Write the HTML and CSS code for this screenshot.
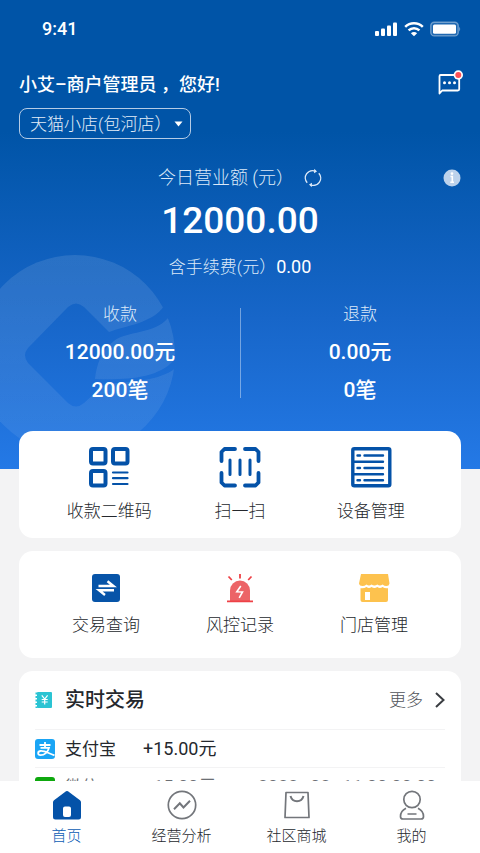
FILE: index.html
```html
<!DOCTYPE html>
<html lang="zh-CN">
<head>
<meta charset="utf-8">
<meta name="viewport" content="width=device-width, initial-scale=1">
<title>首页</title>
<link rel="stylesheet" href="styles.css">
</head>
<body>
<main class="page">
  <header class="hero">
    <svg class="hero-mark" viewBox="-26 254 202 202" aria-hidden="true">
      <defs>
        <linearGradient id="fade" x1="0" y1="0" x2="0" y2="1"><stop offset="0" stop-color="#fff" stop-opacity=".11"/><stop offset="1" stop-color="#fff" stop-opacity=".07"/></linearGradient>
        <mask id="cut" maskUnits="userSpaceOnUse" x="-26" y="254" width="204" height="204">
          <rect x="-26" y="254" width="204" height="204" fill="#fff"/>
          <path fill="#000" d="M28 348 68 307Q76 300 84 307L109 332C125 326 153 323 164 306L180 296V364C165 380 140 381 105 384L84 403Q76 410 68 403L28 363Q22 355 28 348Z"/>
          <path fill="#fff" d="M168 318C155 334 126 331 114 341 102 350 97 362 95 379 124 380 158 379 174 360L180 350V310Z"/>
        </mask>
      </defs>
      <circle cx="75" cy="355" r="100" fill="url(#fade)" mask="url(#cut)"/>
    </svg>

    <div class="status">
      <span class="clock">9:41</span>
      <span class="status-icons">
        <svg width="23" height="15" viewBox="0 0 23 15" fill="#fff" aria-hidden="true"><rect x="0" y="9" width="4" height="5" rx="1"/><rect x="6" y="6.500" width="4" height="7.500" rx="1"/><rect x="12" y="3.500" width="4" height="10.500" rx="1"/><rect x="18" y="0.500" width="4" height="13.500" rx="1"/></svg>
        <svg width="20" height="15" viewBox="0 0 20 15" fill="none" stroke="#fff" stroke-width="2.500" aria-hidden="true"><path d="M1.200 4.800C6 .2 14 .2 18.800 4.800M4.600 8.300C7.600 5.400 12.400 5.400 15.400 8.300"/><path d="M10 14.300 6.900 11.200C8.600 9.500 11.400 9.500 13.100 11.200Z" fill="#fff" stroke="none"/></svg>
        <svg width="31" height="16" viewBox="0 0 31 16" aria-hidden="true"><rect x=".8" y="1.300" width="27.400" height="13.600" rx="3.500" fill="#fff" fill-opacity=".12" stroke="#fff" stroke-opacity=".4" stroke-width="1.400"/><rect x="3" y="3.400" width="23" height="9.400" rx="1.500" fill="#fff"/><path d="M29.200 5.800q2 2.300 0 4.600z" fill="#fff" fill-opacity=".45"/></svg>
      </span>
    </div>

    <div class="greet">
      <h1>小艾–商户管理员 ，您好!</h1>
      <button class="icon-btn" type="button" aria-label="消息">
        <svg width="26" height="26" viewBox="0 0 26 26" aria-hidden="true"><path d="M4.500 21.500V4.200Q4.500 3 5.700 3H22.800Q24.200 3 24.200 4.200V17.300Q24.200 18.500 22.800 18.500H7.200Z" fill="none" stroke="#fff" stroke-width="1.800" stroke-linejoin="round"/><g fill="#fff"><circle cx="9.500" cy="10.700" r="1.500"/><circle cx="14.500" cy="10.700" r="1.500"/><circle cx="19.500" cy="10.700" r="1.500"/></g><circle cx="23.300" cy="3" r="4.700" fill="#fff"/><circle cx="23.300" cy="3" r="3" fill="#ff4f55"/></svg>
      </button>
    </div>

    <div class="store">
      <select aria-label="门店"><option>天猫小店(包河店）</option></select>
      <svg class="store-arrow" width="9" height="6" viewBox="0 0 9 6" aria-hidden="true"><path d="M.5.500h8L4.500 5.500z" fill="#fff"/></svg>
    </div>

    <div class="headline">
      <span class="headline-main">今日营业额 (元）
        <button class="icon-btn" type="button" aria-label="刷新">
          <svg width="18" height="20" viewBox="0 0 18 20" fill="none" stroke="#dce9f8" stroke-width="1.400" aria-hidden="true"><path d="M3.200 14.800A7.300 7.300 0 0 1 11.500 3.200M14.800 5.200A7.300 7.300 0 0 1 6.500 16.800"/><path d="M10.300.8 13 3.600 10 5.200M7.700 19.200 5 16.400 8 14.800" fill="#dce9f8" stroke="none"/></svg>
        </button>
      </span>
      <button class="icon-btn info" type="button" aria-label="说明">
        <svg width="18" height="18" viewBox="0 0 18 18" aria-hidden="true"><circle cx="9" cy="9" r="8.500" fill="#bcd2ec"/><path d="M7.500 7.500H9.300V13M7.300 13.200H11" fill="none" stroke="#fff" stroke-width="1.600"/><circle cx="9" cy="4.600" r="1.300" fill="#fff"/></svg>
      </button>
    </div>
    <p class="total">12000.00</p>
    <p class="fee">含手续费(元）<b>0.00</b></p>

    <div class="stats">
      <section class="stat"><h2>收款</h2><p>12000.00元</p><p>200笔</p></section>
      <section class="stat"><h2>退款</h2><p>0.00元</p><p>0笔</p></section>
    </div>
  </header>

  <div class="cards">
    <nav class="card tools tools-main" aria-label="常用功能">
      <a href="#qr">
        <svg width="42" height="42" viewBox="0 0 42 42" fill="none" stroke="#0452a8" stroke-width="4" aria-hidden="true"><rect x="3" y="3" width="14.500" height="14.500" rx="2"/><rect x="25" y="3" width="14.500" height="14.500" rx="2"/><rect x="3" y="25" width="14.500" height="14.500" rx="2"/><path d="M25 26.500H39.500M25 32.200H39.500M25 38H39.500" stroke-width="2.200" stroke-linecap="round"/></svg>
        收款二维码</a>
      <a href="#scan">
        <svg width="42" height="42" viewBox="0 0 42 42" fill="none" stroke="#0452a8" stroke-width="3.800" stroke-linecap="round" stroke-linejoin="round" aria-hidden="true"><path d="M2.500 15V6L5.500 3H16M26 3H36.500L39.500 6V15M39.500 27V36.500L36.500 39.500H26M16 39.500H5.500L2.500 36.500V27"/><path d="M11 14V28.500M21 14V28.500M31 14V28.500" stroke-width="3"/></svg>
        扫一扫</a>
      <a href="#devices">
        <svg width="42" height="42" viewBox="0 0 42 42" fill="none" stroke="#0452a8" aria-hidden="true"><rect x="2.800" y="2.800" width="37" height="37" rx="1.500" stroke-width="3.400"/><path d="M7.500 9.500H10M14.500 9.500H33M7.500 22H10M14.500 22H33M7.500 34.300H10M14.500 34.300H33" stroke-width="2.400" stroke-linecap="round"/><path d="M4 15.700H33M4 28.300H33" stroke-width="2.400" stroke-linecap="round"/></svg>
        设备管理</a>
    </nav>

    <nav class="card tools tools-more" aria-label="更多功能">
      <a href="#query">
        <svg width="30" height="30" viewBox="0 0 30 30" aria-hidden="true"><rect x="1" y="1" width="28" height="28" rx="3" fill="#0754a8"/><path d="M7.500 13H22.500L16.500 8.200M23 17.200H8L14 22" fill="none" stroke="#fff" stroke-width="2.400"/></svg>
        交易查询</a>
      <a href="#risk">
        <svg width="30" height="30" viewBox="0 0 30 30" aria-hidden="true"><path d="M5 28V17.500A10 10 0 0 1 25 17.500V28Z" fill="#ec6467"/><path d="M2 28.300H28M15 1V5.500M3.500 3.500 6.800 7M26.500 3.500 23.200 7" stroke="#ee4146" stroke-width="1.800"/><path d="M15.800 13 11.800 18.700 17.500 19 14.200 24.800" fill="none" stroke="#fff" stroke-width="1.600"/></svg>
        风控记录</a>
      <a href="#stores">
        <svg width="34" height="30" viewBox="0 0 34 30" fill="#fdc24e" aria-hidden="true"><path d="M4 1H31L32.500 10.500Q32 13 29.500 13 27.500 13 25.500 11.500 23 13.500 20.300 11.500 17.500 13.500 14.500 11.500 12 13.500 9.500 11.500 7.500 13 5.500 13 2.500 13 2 10.500Z"/><path fill-rule="evenodd" d="M3.500 15.200Q7 15.800 9.500 14 12 15.800 14.500 14 17.500 15.800 20.300 14 23 15.800 25.500 14 28 15.800 31 15.200V27Q31 29 29 29H5.500Q3.500 29 3.500 27ZM8 19V27H13V19Z"/></svg>
        门店管理</a>
    </nav>

    <section class="card feed">
      <header class="feed-head">
        <svg width="18" height="18" viewBox="0 0 18 18" aria-hidden="true"><rect x="2" y="1" width="15" height="16" rx="1" fill="#2bc4d3"/><path d="M1.500 1.500V17" stroke="#2bc4d3" stroke-width="2" stroke-dasharray="2 1.500"/><path d="M6.800 4.300 9.700 8 12.600 4.300M9.700 8V13.500M6.700 8.500H12.700M6.700 11H12.700" fill="none" stroke="#fff" stroke-width="1.200"/></svg>
        <h2>实时交易</h2>
        <a href="#all">更多
          <svg width="10" height="16" viewBox="0 0 10 16" fill="none" stroke="#3a3d42" stroke-width="2" aria-hidden="true"><path d="M1 1 8.500 8 1 15"/></svg></a>
      </header>
      <ul>
        <li>
          <svg width="20" height="20" viewBox="0 0 20 20" aria-hidden="true"><rect width="20" height="20" rx="3" fill="#1aa5f5"/><path d="M4.500 6H15.500M10 3V8.500M5.500 8.900H14C13 13 9.500 16.200 5.500 16.200 2.500 16.200 2.300 12.600 5.300 12 9 11.400 13 14 19.500 16.300" fill="none" stroke="#fff" stroke-width="1.800"/></svg>
          <span>支付宝</span><span class="sum">+15.00元</span>
        </li>
        <li class="dim">
          <svg width="20" height="20" viewBox="0 0 20 20" aria-hidden="true"><rect width="20" height="20" rx="3" fill="#0ea80e"/><ellipse cx="8" cy="8.500" rx="5.500" ry="4.500" fill="#fff"/><ellipse cx="13" cy="13" rx="4.500" ry="3.500" fill="#fff"/></svg>
          <span>微信</span><span class="sum">+15.00元</span><time>2022–02–11 00:00:00</time>
        </li>
      </ul>
    </section>
  </div>
</main>

<nav class="tabs" aria-label="主导航">
  <a class="active" href="#home" aria-current="page">
    <svg width="30" height="30" viewBox="0 0 30 30" aria-hidden="true"><path fill="#0452a8" fill-rule="evenodd" d="M14 1.300Q15 .5 16 1.300L28 10.200Q29 11 29 12.300V27Q29 29.500 26.500 29.500H3.500Q1 29.500 1 27V12.300Q1 11 2 10.200ZM13 16.500Q11 16.500 11 18.500V25Q11 27 13 27H17Q19 27 19 25V18.500Q19 16.500 17 16.500Z"/></svg>
    首页</a>
  <a href="#stats">
    <svg width="30" height="30" viewBox="0 0 30 30" fill="none" stroke="#73767b" stroke-width="1.700" aria-hidden="true"><circle cx="15" cy="15" r="13.700"/><path d="M7 19.300 12.800 13.300 16.500 17.500 23 10.800" stroke-width="2"/></svg>
    经营分析</a>
  <a href="#mall">
    <svg width="30" height="30" viewBox="0 0 30 30" fill="none" stroke="#73767b" stroke-width="1.700" stroke-linejoin="round" aria-hidden="true"><path d="M4 2.500H26L27 27.500H3Z"/><path d="M8.500 6C10.500 13 19.500 13 21.500 6" stroke-width="2"/></svg>
    社区商城</a>
  <a href="#me">
    <svg width="30" height="30" viewBox="0 0 30 30" fill="none" stroke="#73767b" stroke-width="1.700" aria-hidden="true"><circle cx="15" cy="9.500" r="8.200"/><path d="M9 18.300C5.500 20 3.500 23 3.500 26.500Q3.500 29 6 29H24Q26.500 29 26.500 26.500C26.500 23 24.500 20 21 18.300M10.500 24H19.500"/></svg>
    我的</a>
</nav>
</body>
</html>
```
FILE: styles.css
```css
* { box-sizing: border-box; }

body {
  margin: 0;
  height: 100vh;
  display: flex;
  flex-direction: column;
  background: #f3f3f4;
  color: #25282d;
  font: 300 17px/24px Roboto, "Noto Sans CJK SC", sans-serif;
}

h1, h2, p, ul { margin: 0; padding: 0; font-size: inherit; }
ul { list-style: none; }
a { color: inherit; text-decoration: none; }
svg { display: block; flex: none; overflow: visible; }

.icon-btn {
  padding: 0;
  border: 0;
  background: none;
  cursor: pointer;
}

.page {
  flex: 1;
  min-height: 0;
  overflow: hidden;
}

.hero {
  position: relative;
  overflow: hidden;
  padding: 14px 19px 60px;
  background: linear-gradient(#0054a7 28%, #1766c9 68%, #2479e6);
  color: #fff;
}

.hero > * { position: relative; }

.hero > .hero-mark {
  position: absolute;
  left: -26px;
  top: 254px;
  width: 202px;
}

.status {
  display: flex;
  justify-content: space-between;
  align-items: center;
  height: 30px;
  padding-left: 23px;
}

.clock { font-size: 18px; font-weight: 500; }

.status-icons { display: flex; align-items: center; gap: 6px; }

.greet {
  display: flex;
  justify-content: space-between;
  align-items: center;
  margin-top: 29px;
  height: 24px;
}

.greet h1 { font-size: 18px; font-weight: 500; }

.store {
  display: inline-block;
  margin-top: 11px;
  vertical-align: top;
}

.store select {
  appearance: none;
  display: block;
  width: 172px;
  height: 31px;
  padding: 0 10px;
  border: 1px solid #b5cce6;
  border-radius: 8px;
  background: transparent;
  color: #e3edf8;
  font: inherit;
}

.store-arrow {
  position: absolute;
  right: 8px;
  top: 13px;
  pointer-events: none;
}

.headline {
  display: grid;
  grid-template-columns: 1fr auto 1fr;
  align-items: center;
  margin-top: 27px;
  font-size: 18px;
  color: #dce9f8;
}

.headline-main {
  grid-column: 2;
  display: flex;
  align-items: center;
  gap: 10px;
}

.info { justify-self: end; }

.total {
  margin-top: 11px;
  font-size: 37px;
  line-height: 40px;
  font-weight: 500;
  text-align: center;
}

.fee {
  margin-top: 14px;
  text-align: center;
  color: #dce9f8;
}

.fee b { font-size: 18px; font-weight: 400; color: #fff; }

.stats {
  display: grid;
  grid-template-columns: 1fr 1fr;
  margin: 23px -19px 0;
  text-align: center;
}

.stats::after {
  content: "";
  position: absolute;
  left: 50%;
  top: 6px;
  height: 90px;
  border-left: 1px solid rgba(255, 255, 255, .4);
}

.stat h2 {
  margin-bottom: 7px;
  font-weight: 300;
  color: #dce9f8;
}

.stat p { font-size: 21px; line-height: 38px; font-weight: 500; }

.cards {
  position: relative;
  display: grid;
  gap: 13px;
  margin: -38px 19px 0;
}

.card { border-radius: 14px; background: #fff; }

.tools {
  display: grid;
  grid-template-columns: repeat(3, 1fr);
}

.tools a {
  display: flex;
  flex-direction: column;
  align-items: center;
}

.tools-main { padding: 15px 25px; }
.tools-main a { gap: 11px; }
.tools-more { padding: 22px 20px 21px; }
.tools-more a { gap: 10px; }

.feed { padding: 0 16px; }

.feed-head {
  display: flex;
  align-items: center;
  height: 58px;
}

.feed-head h2 {
  flex: 1;
  margin-left: 12px;
  font-size: 20px;
  font-weight: 500;
}

.feed-head a {
  display: flex;
  align-items: center;
  gap: 12px;
  color: #505359;
}

.feed li {
  display: grid;
  grid-template-columns: 30px 78px 115px 1fr;
  align-items: center;
  height: 38px;
  border-top: 1px solid #f3f3f4;
  font-weight: 400;
}

.feed .sum, .feed time { font-size: 18px; white-space: nowrap; }

.feed .dim { color: #6c6f74; }

.tabs {
  position: relative;
  display: grid;
  grid-template-columns: repeat(4, 1fr);
  padding: 9px 11px 5px 9px;
  background: #fff;
  font-size: 15px;
}

.tabs a {
  display: flex;
  flex-direction: column;
  align-items: center;
  gap: 4px;
}

.tabs .active { color: #0b5cb4; }
```
